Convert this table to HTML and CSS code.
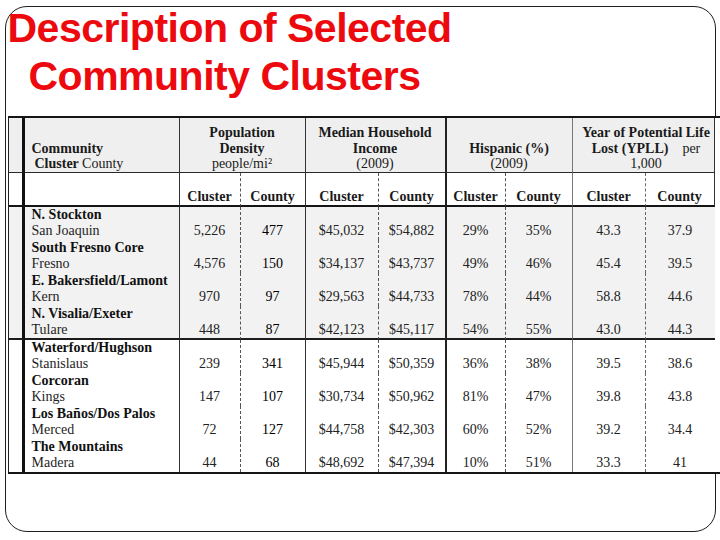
FILE: index.html
```html
<!DOCTYPE html>
<html lang="en">
<head>
<meta charset="utf-8">
<title>Description of Selected Community Clusters</title>
<link rel="stylesheet" href="styles.css">
</head>
<body>
<div class="slide">
  <h1 class="title"><span class="line">Description of Selected</span><span class="line indent">Community Clusters</span></h1>
  <table class="clusters">
    <colgroup>
      <col class="w-gap"><col class="w-name">
      <col class="w-pc"><col class="w-pk">
      <col class="w-ic"><col class="w-ik">
      <col class="w-hc"><col class="w-hk">
      <col class="w-yc"><col class="w-yk">
      <col class="w-edge">
    </colgroup>
    <thead>
      <tr class="hrow1">
        <th class="gap"></th>
        <th class="comm">Community<br><span class="sub">Cluster <span class="reg">County</span></span></th>
        <th colspan="2">Population<br>Density<br><span class="reg">people/mi²</span></th>
        <th colspan="2">Median Household<br>Income<br><span class="reg">(2009)</span></th>
        <th colspan="2">Hispanic (%)<br><span class="reg">(2009)</span></th>
        <th colspan="2" class="ypll">Year of Potential Life<br>Lost (YPLL)&nbsp;&nbsp;&nbsp; <span class="reg">per</span><br><span class="reg">1,000</span></th>
        <th class="edge"></th>
      </tr>
      <tr class="hrow2">
        <th class="gap"></th><th></th>
        <th>Cluster</th><th>County</th>
        <th>Cluster</th><th>County</th>
        <th>Cluster</th><th>County</th>
        <th>Cluster</th><th>County</th>
        <th class="edge"></th>
      </tr>
    </thead>
    <tbody>
      <tr class="shade">
        <td class="gap"></td>
        <td class="name"><b>N. Stockton</b><br>San Joaquin</td>
        <td>5,226</td><td class="strong">477</td><td>$45,032</td><td>$54,882</td><td>29%</td><td>35%</td><td>43.3</td><td>37.9</td>
        <td class="edge"></td>
      </tr>
      <tr class="shade">
        <td class="gap"></td>
        <td class="name"><b>South Fresno Core</b><br>Fresno</td>
        <td>4,576</td><td class="strong">150</td><td>$34,137</td><td>$43,737</td><td>49%</td><td>46%</td><td>45.4</td><td>39.5</td>
        <td class="edge"></td>
      </tr>
      <tr class="shade">
        <td class="gap"></td>
        <td class="name"><b>E. Bakersfield/Lamont</b><br>Kern</td>
        <td>970</td><td class="strong">97</td><td>$29,563</td><td>$44,733</td><td>78%</td><td>44%</td><td>58.8</td><td>44.6</td>
        <td class="edge"></td>
      </tr>
      <tr class="shade split">
        <td class="gap"></td>
        <td class="name"><b>N. Visalia/Exeter</b><br>Tulare</td>
        <td>448</td><td class="strong">87</td><td>$42,123</td><td>$45,117</td><td>54%</td><td>55%</td><td>43.0</td><td>44.3</td>
        <td class="edge"></td>
      </tr>
      <tr>
        <td class="gap"></td>
        <td class="name"><b>Waterford/Hughson</b><br>Stanislaus</td>
        <td>239</td><td class="strong">341</td><td>$45,944</td><td>$50,359</td><td>36%</td><td>38%</td><td>39.5</td><td>38.6</td>
        <td class="edge"></td>
      </tr>
      <tr>
        <td class="gap"></td>
        <td class="name"><b>Corcoran</b><br>Kings</td>
        <td>147</td><td class="strong">107</td><td>$30,734</td><td>$50,962</td><td>81%</td><td>47%</td><td>39.8</td><td>43.8</td>
        <td class="edge"></td>
      </tr>
      <tr>
        <td class="gap"></td>
        <td class="name"><b>Los Baños/Dos Palos</b><br>Merced</td>
        <td>72</td><td class="strong">127</td><td>$44,758</td><td>$42,303</td><td>60%</td><td>52%</td><td>39.2</td><td>34.4</td>
        <td class="edge"></td>
      </tr>
      <tr>
        <td class="gap"></td>
        <td class="name"><b>The Mountains</b><br>Madera</td>
        <td>44</td><td class="strong">68</td><td>$48,692</td><td>$47,394</td><td>10%</td><td>51%</td><td>33.3</td><td>41</td>
        <td class="edge"></td>
      </tr>
    </tbody>
  </table>
</div>
</body>
</html>
```
FILE: styles.css
```css
html, body {
  margin: 0;
  padding: 0;
  background: #ffffff;
}

.slide {
  box-sizing: border-box;
  width: 711px;
  height: 526px;
  margin: 6px 0 0 5px;
  border: 1.5px solid #1e1e1e;
  border-radius: 22px;
}

.title {
  margin: -3px 0 0 1.5px;
  font-family: "Liberation Sans", Arial, sans-serif;
  font-weight: bold;
  font-size: 41px;
  line-height: 48px;
  letter-spacing: -0.5px;
  color: #ec0a0f;
}

.title .line {
  display: block;
  white-space: nowrap;
}

.title .indent {
  padding-left: 21px;
}

.clusters {
  table-layout: fixed;
  width: 712px;
  margin: 15.5px 0 0 1.5px;
  border-collapse: separate;
  border-spacing: 0;
  border-top: 2px solid #151515;
  border-bottom: 2px solid #151515;
  border-left: 1px solid #222;
  font-family: "Liberation Serif", "Times New Roman", serif;
  font-size: 14px;
  color: #1a1a1a;
}

.w-gap { width: 16px; }
.w-name { width: 155px; }
.w-pc { width: 61px; }
.w-pk { width: 65px; }
.w-ic { width: 73px; }
.w-ik { width: 68px; }
.w-hc { width: 59px; }
.w-hk { width: 67px; }
.w-yc { width: 73px; }
.w-yk { width: 69px; }
.w-edge { width: 5px; }

.clusters th,
.clusters td {
  padding: 0;
  box-sizing: border-box;
}

.clusters .edge {
  background: #ffffff;
  border: none !important;
}

/* header row 1 */
.hrow1 {
  height: 55px;
  background: #efefef;
}

.hrow1 th {
  vertical-align: bottom;
  text-align: center;
  font-weight: bold;
  line-height: 15.5px;
  border-bottom: 1px solid #2a2a2a;
  white-space: nowrap;
}

.hrow1 th:nth-child(1) { border-right: 3px solid #111; }
.hrow1 th:nth-child(2) { border-right: 1px solid #333; }
.hrow1 th:nth-child(3) { border-right: 1px solid #333; }
.hrow1 th:nth-child(4) { border-right: 2px solid #222; }
.hrow1 th:nth-child(5) { border-right: 1px solid #777; }
.hrow1 th:nth-child(6) { border-right: 1px solid #333; }

.hrow1 .comm {
  text-align: left;
  padding-left: 7px;
}

.hrow1 .comm .sub {
  padding-left: 3px;
}

.hrow1 .ypll {
  padding-left: 6px;
}

.reg {
  font-weight: normal;
}

/* header row 2 */
.hrow2 {
  height: 34px;
  background: #ffffff;
}

.hrow2 th {
  vertical-align: bottom;
  text-align: center;
  font-weight: bold;
  line-height: 16px;
  border-bottom: 2px solid #151515;
}

/* shared column dividers for header row 2 and body */
.hrow2 th:nth-child(1), .clusters td:nth-child(1) { border-right: 3px solid #111; }
.hrow2 th:nth-child(2), .clusters td:nth-child(2) { border-right: 1px solid #333; }
.hrow2 th:nth-child(3), .clusters td:nth-child(3) { border-right: 1px dashed #555; }
.hrow2 th:nth-child(4), .clusters td:nth-child(4) { border-right: 1px solid #333; }
.hrow2 th:nth-child(5), .clusters td:nth-child(5) { border-right: 1px dashed #555; }
.hrow2 th:nth-child(6), .clusters td:nth-child(6) { border-right: 2px solid #222; }
.hrow2 th:nth-child(7), .clusters td:nth-child(7) { border-right: 1px dashed #555; }
.hrow2 th:nth-child(8), .clusters td:nth-child(8) { border-right: 1px solid #777; }
.hrow2 th:nth-child(9), .clusters td:nth-child(9) { border-right: 1px dashed #666; }
.hrow2 th:nth-child(10) { border-right: 1px solid #333; }

/* body */
.clusters tbody tr {
  height: 33px;
}

.clusters tbody tr.shade {
  background: #f2f2f2;
}

.clusters tbody tr.split {
  height: 34px;
}

.clusters tbody tr.split td:not(.edge) {
  border-bottom: 2px solid #1c1c1c;
}

.clusters td {
  vertical-align: middle;
  text-align: center;
  line-height: 16px;
  padding-top: 16px;
  color: #222;
}

.clusters td.gap {
  padding-top: 0;
}

.clusters td.name {
  text-align: left;
  padding: 0 0 0 7px;
  white-space: nowrap;
  color: #1e1e1e;
}

.clusters td.name b {
  color: #111;
}

.clusters td.strong {
  color: #000;
}
```
